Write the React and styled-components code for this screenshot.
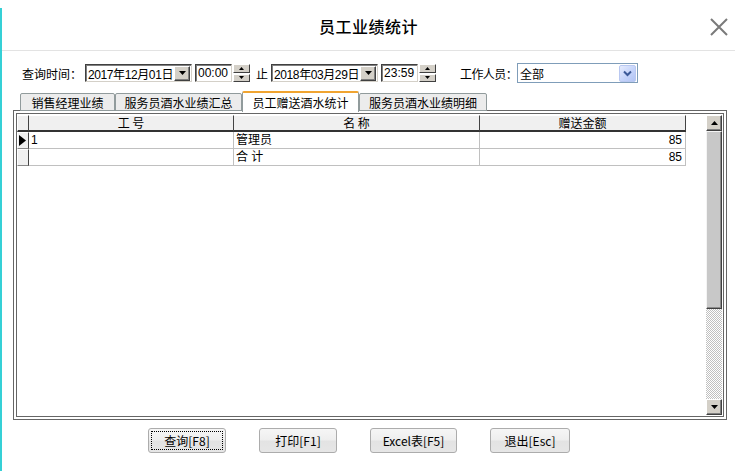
import React from 'react';
import styled, { createGlobalStyle } from 'styled-components';

const GlobalStyle = createGlobalStyle`
    * { box-sizing: border-box; }
    body {
        margin: 0;
        background: #fff;
        font-family: "Liberation Sans", "Noto Sans CJK SC", sans-serif;
        font-size: 12px;
        color: #000;
    }
`;

const Page = styled.div`
    display: flex;
    width: 735px;
    height: 471px;
    overflow: hidden;
`;

// faixa ciano da janela de trás
const EdgeStrip = styled.div`
    width: 2px;
    margin-top: 8px;
    background: #35d0d6;
`;

const Dialog = styled.div`
    flex: 1;
    display: flex;
    flex-direction: column;
`;

const TitleBar = styled.header`
    height: 51px;
    display: grid;
    grid-template-columns: 1fr auto 1fr;
    align-items: center;
    border-bottom: 1px solid #e3e3e3;
`;

const Title = styled.h1`
    grid-column: 2;
    margin: 0;
    font-family: "Noto Sans CJK SC", sans-serif;
    font-size: 16px;
    font-weight: 500;
    letter-spacing: 0.5px;
    padding-top: 2px;
`;

const CloseBtn = styled.div`
    grid-column: 3;
    justify-self: end;
    margin-right: 7px;
    margin-top: 3px;
    width: 18px;
    height: 18px;
    display: flex;
`;

const QueryRow = styled.div`
    display: flex;
    align-items: center;
    height: 20px;
    margin-top: 12px;
    padding-left: 20px;
`;

const Label = styled.span`
    font-family: "Noto Sans CJK SC", sans-serif;
    font-size: 12px;
    margin-left: ${p => p.$ml || 0}px;
    margin-right: ${p => p.$mr || 0}px;
    letter-spacing: ${p => p.$ls || 0}px;
    white-space: nowrap;
`;

const SunkenBox = styled.div`
    display: flex;
    align-items: center;
    width: ${p => p.$w}px;
    height: 18px;
    margin-left: ${p => p.$ml || 0}px;
    border-top: 1px solid #404040;
    border-left: 1px solid #404040;
    border-right: 1px solid #d4d0c8;
    border-bottom: 1px solid #d4d0c8;
    box-shadow: inset 1px 1px 0 #808080;
    background: #fff;
`;

const BoxText = styled.span`
    flex: 1;
    padding-left: 2px;
    font-family: "Liberation Sans", "Noto Sans CJK SC", sans-serif;
    font-size: 12px;
    letter-spacing: ${p => p.$ls || 0}px;
    white-space: nowrap;
    overflow: hidden;
`;

const DropBtn = styled.div`
    flex: none;
    width: 16px;
    height: 15px;
    margin-right: 1px;
    background: #d4d0c8;
    border-top: 1px solid #fff;
    border-left: 1px solid #fff;
    border-right: 1px solid #404040;
    border-bottom: 1px solid #404040;
    box-shadow: inset -1px -1px 0 #808080;
    display: flex;
    align-items: center;
    justify-content: center;
`;

const Spinner = styled.div`
    display: flex;
    flex-direction: column;
    width: 17px;
    height: 18px;
    margin-left: 1px;
    gap: 1px;
`;

const SpinHalf = styled.div`
    flex: 1;
    background: #d4d0c8;
    border-top: 1px solid #fff;
    border-left: 1px solid #fff;
    border-right: 1px solid #404040;
    border-bottom: 1px solid #404040;
    display: flex;
    align-items: center;
    justify-content: center;
`;

const SelectBox = styled.div`
    display: flex;
    align-items: center;
    width: 121px;
    height: 20px;
    border: 1px solid #7f9db9;
    background: #fff;
`;

const SelectBtn = styled.div`
    width: 17px;
    height: 17px;
    margin-right: 1px;
    border: 1px solid #b9c8f1;
    border-radius: 2px;
    background: linear-gradient(135deg, #e6ecfd 0%, #c4d3fa 55%, #b2c4f4 100%);
    display: flex;
    align-items: center;
    justify-content: center;
`;

const TabRow = styled.div`
    display: flex;
    align-items: flex-end;
    height: 20px;
    margin-top: 8px;
    padding-left: 18px;
    position: relative;
    z-index: 1;
`;

const Tab = styled.div`
    width: ${p => p.$w}px;
    height: ${p => (p.$active ? 21 : 18)}px;
    font-family: "Noto Sans CJK SC", sans-serif;
    font-size: 12px;
    display: flex;
    align-items: center;
    justify-content: center;
    background: ${p => (p.$active ? '#fff' : '#ececec')};
    border: 1px solid #919b9c;
    border-bottom: ${p => (p.$active ? 'none' : '1px solid #919b9c')};
    border-top: ${p => (p.$active ? '2px solid #f0a431' : '1px solid #919b9c')};
    border-radius: 2px 2px 0 0;
    padding-top: ${p => (p.$active ? 0 : 1)}px;
    margin-bottom: ${p => (p.$active ? -1 : 0)}px;
`;

const Panel = styled.div`
    width: 714px;
    height: 310px;
    margin-left: 11px;
    margin-top: -1px;
    border: 1px solid #666;
    padding: 2px;
    background: #fff;
`;

const PanelInner = styled.div`
    height: 100%;
    border: 1px solid #666;
    display: flex;
    padding-top: 1px;
`;

const Grid = styled.div`
    display: grid;
    grid-template-columns: 12px 205px 246px 206px;
    grid-auto-rows: 17px;
    align-content: start;
`;

const HeadCell = styled.div`
    background: #f0f0f0;
    border-top: 1px solid #fff;
    border-left: ${p => (p.$first ? '1px solid #fff' : 'none')};
    border-right: 1px solid #444;
    border-bottom: 2px solid #333;
    font-family: "Noto Sans CJK SC", sans-serif;
    display: flex;
    align-items: center;
    justify-content: center;
    white-space: pre;
    line-height: 1;
`;

const Indicator = styled.div`
    background: #f0f0f0;
    border-top: 1px solid #fff;
    border-left: 1px solid #fff;
    border-right: 1px solid #444;
    border-bottom: 1px solid #888;
    display: flex;
    align-items: center;
    justify-content: flex-start;
    padding-left: 1px;
`;

const Cell = styled.div`
    border-right: 1px solid #c0c0c0;
    border-bottom: 1px solid #c0c0c0;
    display: flex;
    align-items: center;
    justify-content: ${p => (p.$right ? 'flex-end' : 'flex-start')};
    padding: 0 3px 0 2px;
    font-family: "Liberation Sans", "Noto Sans CJK SC", sans-serif;
    white-space: pre;
    line-height: 1;
`;

const Spacer = styled.div`
    flex: 1;
`;

const ScrollBar = styled.div`
    width: 16px;
    height: 300px;
    display: flex;
    flex-direction: column;
    margin-right: 1px;
`;

const ScrollBtn = styled.div`
    height: 16px;
    background: #d4d0c8;
    border-top: 1px solid #fff;
    border-left: 1px solid #fff;
    border-right: 1px solid #404040;
    border-bottom: 1px solid #404040;
    box-shadow: inset -1px -1px 0 #808080;
    display: flex;
    align-items: center;
    justify-content: center;
`;

const Thumb = styled.div`
    height: 178px;
    background: #c8c8c8;
    border-top: 1px solid #f4f4f4;
    border-left: 1px solid #f4f4f4;
    border-right: 1px solid #404040;
    border-bottom: 1px solid #404040;
    box-shadow: inset -1px -1px 0 #8c8c8c;
`;

const Track = styled.div`
    flex: 1;
    background: repeating-conic-gradient(#c0c0c0 0 25%, #fff 0 50%) 0 0 / 2px 2px;
`;

const ButtonRow = styled.div`
    display: flex;
    gap: 33px;
    margin-top: 8px;
    padding-left: 146px;
`;

const Button = styled.button`
    width: ${p => p.$w}px;
    height: 25px;
    border: 1px solid #acacac;
    border-radius: 3px;
    background: linear-gradient(#f6f6f6 0%, #eeeeee 48%, #e3e3e3 52%, #e6e6e6 100%);
    font-family: "Noto Sans CJK SC", "Liberation Sans", sans-serif;
    font-size: 12px;
    color: #000;
    padding: 2px;
    display: flex;
`;

const ButtonFace = styled.span`
    flex: 1;
    display: flex;
    align-items: center;
    justify-content: center;
    outline: ${p => (p.$focus ? '1px dotted #000' : 'none')};
    outline-offset: -1px;
`;

const Tri = ({ dir = 'down', size = 7, color = '#000' }) => {
    const h = Math.ceil(size / 2);
    const pts = dir === 'down'
        ? `0,0 ${size},0 ${size / 2},${h}`
        : `0,${h} ${size},${h} ${size / 2},0`;
    return (
        <svg width={size} height={h} viewBox={`0 0 ${size} ${h}`}>
            <polygon points={pts} fill={color} />
        </svg>
    );
};

const DateField = ({ text }) => (
    <SunkenBox $w={107}>
        <BoxText $ls={-0.4}>{text}</BoxText>
        <DropBtn><Tri /></DropBtn>
    </SunkenBox>
);

const TimeField = ({ text }) => (
    <>
        <SunkenBox $w={37} $ml={3}>
            <BoxText>{text}</BoxText>
        </SunkenBox>
        <Spinner>
            <SpinHalf><Tri dir="up" size={5} /></SpinHalf>
            <SpinHalf><Tri size={5} /></SpinHalf>
        </Spinner>
    </>
);

const rows = [
    { no: '1', name: '管理员', amount: '85', current: true },
    { no: '', name: '合 计', amount: '85' },
];

function App() {
    return (
        <Page>
            <GlobalStyle />
            <EdgeStrip />
            <Dialog>
                <TitleBar>
                    <Title>员工业绩统计</Title>
                    <CloseBtn>
                        <svg width="18" height="18" viewBox="0 0 18 18">
                            <path d="M1 1 L17 17 M17 1 L1 17" stroke="#7a7a7a" strokeWidth="2" />
                        </svg>
                    </CloseBtn>
                </TitleBar>

                <QueryRow>
                    <Label $mr={3}>查询时间：</Label>
                    <DateField text="2017年12月01日" />
                    <TimeField text="00:00" />
                    <Label $ml={6} $mr={3}>止</Label>
                    <DateField text="2018年03月29日" />
                    <TimeField text="23:59" />
                    <Label $ml={24} $ls={-0.6}>工作人员：</Label>
                    <SelectBox>
                        <BoxText>全部</BoxText>
                        <SelectBtn>
                            <svg width="9" height="7" viewBox="0 0 9 7">
                                <path d="M1 1.5 L4.5 5 L8 1.5" stroke="#3b5998" strokeWidth="2" fill="none" />
                            </svg>
                        </SelectBtn>
                    </SelectBox>
                </QueryRow>

                <TabRow>
                    <Tab $w={95}>销售经理业绩</Tab>
                    <Tab $w={127}>服务员酒水业绩汇总</Tab>
                    <Tab $w={117} $active>员工赠送酒水统计</Tab>
                    <Tab $w={128}>服务员酒水业绩明细</Tab>
                </TabRow>

                <Panel>
                    <PanelInner>
                        <Grid>
                            <HeadCell $first />
                            <HeadCell>工 号</HeadCell>
                            <HeadCell>名 称</HeadCell>
                            <HeadCell>赠送金额</HeadCell>
                            {rows.map((r, i) => (
                                <React.Fragment key={i}>
                                    <Indicator>
                                        {r.current && (
                                            <svg width="7" height="11" viewBox="0 0 7 11">
                                                <polygon points="0,0 7,5.5 0,11" fill="#000" />
                                            </svg>
                                        )}
                                    </Indicator>
                                    <Cell>{r.no}</Cell>
                                    <Cell>{r.name}</Cell>
                                    <Cell $right>{r.amount}</Cell>
                                </React.Fragment>
                            ))}
                        </Grid>
                        <Spacer />
                        <ScrollBar>
                            <ScrollBtn><Tri dir="up" /></ScrollBtn>
                            <Thumb />
                            <Track />
                            <ScrollBtn><Tri /></ScrollBtn>
                        </ScrollBar>
                    </PanelInner>
                </Panel>

                <ButtonRow>
                    <Button $w={78}><ButtonFace $focus>查询[F8]</ButtonFace></Button>
                    <Button $w={78}><ButtonFace>打印[F1]</ButtonFace></Button>
                    <Button $w={87}><ButtonFace>Excel表[F5]</ButtonFace></Button>
                    <Button $w={80}><ButtonFace>退出[Esc]</ButtonFace></Button>
                </ButtonRow>
            </Dialog>
        </Page>
    );
}

export default App;
